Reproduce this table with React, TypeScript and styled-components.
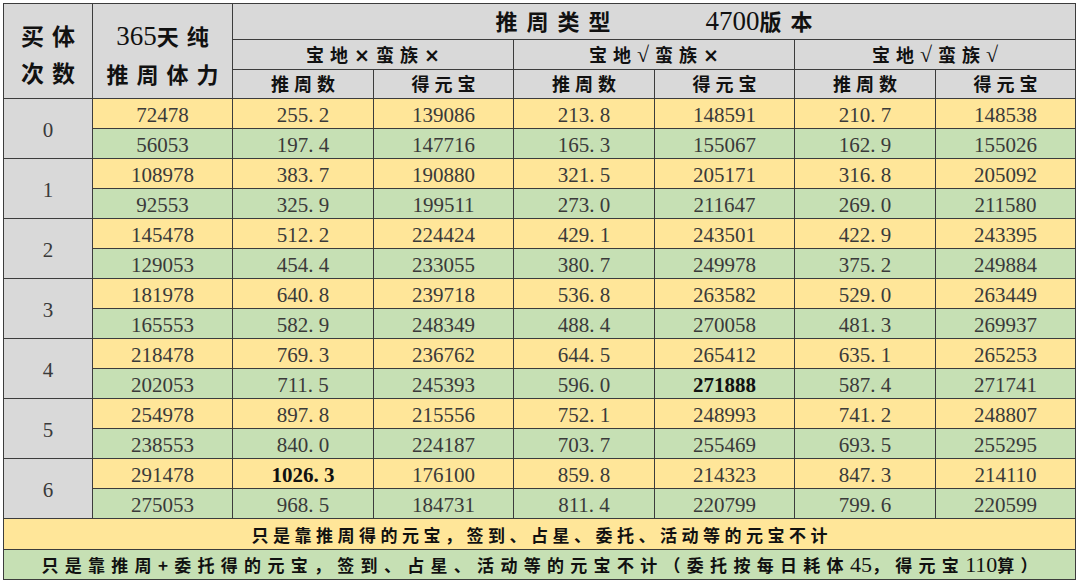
import React from "react";
import styled, { createGlobalStyle } from "styled-components";

const Global = createGlobalStyle`
  html, body { margin: 0; padding: 0; background: #ffffff; }
  body { padding: 3px 0 0 3px; }
`;

const Table = styled.table`
  border-collapse: collapse;
  table-layout: fixed;
  width: 1072px;
  border: 1px solid #3c3c3c;
`;

type Tone = "grey" | "yellow" | "green";
const bg: Record<Tone, string> = {
  grey: "#d9d9d9",
  yellow: "#ffe699",
  green: "#c6e0b4",
};

const Row = styled.tr<{ $h: number }>`
  height: ${(p) => p.$h}px;
`;

const HeadCell = styled.th<{ $size?: number; $ls?: number; $lh?: number; $pt?: number }>`
  background: #d9d9d9;
  border: 1px solid #3c3c3c;
  padding: ${(p) => p.$pt ?? 0}px 0 0 ${(p) => p.$ls ?? 5}px;
  font-family: "Noto Sans CJK SC", "Liberation Serif", serif;
  font-weight: 700;
  font-size: ${(p) => p.$size ?? 18}px;
  letter-spacing: ${(p) => p.$ls ?? 5}px;
  color: #111;
  text-align: center;
  vertical-align: middle;
  line-height: ${(p) => (p.$lh ? p.$lh + "px" : "1.2")};
  white-space: nowrap;
`;

const Num = styled.span<{ $size?: number }>`
  font-family: "Liberation Serif", serif;
  font-weight: 400;
  letter-spacing: 0;
  font-size: ${(p) => p.$size ?? 24}px;
`;

const Mark = styled.span<{ $check?: boolean }>`
  font-family: ${(p) => (p.$check ? '"Liberation Serif", serif' : '"DejaVu Sans", sans-serif')};
  font-weight: ${(p) => (p.$check ? 400 : 700)};
  font-size: ${(p) => (p.$check ? 22 : 19)}px;
  line-height: 1;
  letter-spacing: 6px;
`;

const Cell = styled.td<{ $tone: Tone; $bold?: boolean }>`
  background: ${(p) => bg[p.$tone]};
  border: 1px solid #3c3c3c;
  padding: 3px 0 0 0;
  font-family: "Liberation Serif", serif;
  font-size: 21px;
  font-weight: ${(p) => (p.$bold ? 700 : 400)};
  color: ${(p) => (p.$bold ? "#111" : "#3a3a3a")};
  text-align: center;
  vertical-align: middle;
  line-height: 1;
`;

const IndexCell = styled.td`
  background: #d9d9d9;
  border: 1px solid #3c3c3c;
  padding: 4px 0 0 0;
  font-family: "Liberation Serif", serif;
  font-size: 21px;
  color: #3a3a3a;
  text-align: center;
  vertical-align: middle;
`;

const NoteCell = styled.td<{ $tone: Tone; $ls: number }>`
  background: ${(p) => bg[p.$tone]};
  border: 1px solid #3c3c3c;
  padding: 0 0 0 ${(p) => p.$ls}px;
  font-family: "Noto Sans CJK SC", sans-serif;
  font-weight: 700;
  font-size: 17px;
  letter-spacing: ${(p) => p.$ls}px;
  color: #111;
  text-align: center;
  vertical-align: middle;
  white-space: nowrap;
`;

const Gap = styled.span`
  display: inline-block;
  width: 86px;
`;

const widths = [89, 140, 141, 140, 141, 140, 141, 140];

type DataRow = { v: string[]; bold?: number[] };
const groups: { idx: string; rows: DataRow[] }[] = [
  { idx: "0", rows: [
    { v: ["72478", "255.2", "139086", "213.8", "148591", "210.7", "148538"] },
    { v: ["56053", "197.4", "147716", "165.3", "155067", "162.9", "155026"] },
  ] },
  { idx: "1", rows: [
    { v: ["108978", "383.7", "190880", "321.5", "205171", "316.8", "205092"] },
    { v: ["92553", "325.9", "199511", "273.0", "211647", "269.0", "211580"] },
  ] },
  { idx: "2", rows: [
    { v: ["145478", "512.2", "224424", "429.1", "243501", "422.9", "243395"] },
    { v: ["129053", "454.4", "233055", "380.7", "249978", "375.2", "249884"] },
  ] },
  { idx: "3", rows: [
    { v: ["181978", "640.8", "239718", "536.8", "263582", "529.0", "263449"] },
    { v: ["165553", "582.9", "248349", "488.4", "270058", "481.3", "269937"] },
  ] },
  { idx: "4", rows: [
    { v: ["218478", "769.3", "236762", "644.5", "265412", "635.1", "265253"] },
    { v: ["202053", "711.5", "245393", "596.0", "271888", "587.4", "271741"], bold: [4] },
  ] },
  { idx: "5", rows: [
    { v: ["254978", "897.8", "215556", "752.1", "248993", "741.2", "248807"] },
    { v: ["238553", "840.0", "224187", "703.7", "255469", "693.5", "255295"] },
  ] },
  { idx: "6", rows: [
    { v: ["291478", "1026.3", "176100", "859.8", "214323", "847.3", "214110"], bold: [1] },
    { v: ["275053", "968.5", "184731", "811.4", "220799", "799.6", "220599"] },
  ] },
];

const fmt = (s: string) => s.replace(".", ". ");

const Group = ({ a, b }: { a: boolean; b: boolean }) => (
  <>
    宝地<Mark $check={a}>{a ? "√" : "×"}</Mark>蛮族<Mark $check={b}>{b ? "√" : "×"}</Mark>
  </>
);

export default function App() {
  return (
    <>
      <Global />
      <Table>
        <colgroup>
          {widths.map((w, i) => (
            <col key={i} style={{ width: w }} />
          ))}
        </colgroup>
        <thead>
          <Row $h={36}>
            <HeadCell rowSpan={3} $size={23} $ls={8} $lh={37} $pt={6}>
              买体
              <br />
              次数
            </HeadCell>
            <HeadCell rowSpan={3} $size={22} $ls={8} $lh={37} $pt={6}>
              <Num $size={27}>365</Num>天纯
              <br />
              推周体力
            </HeadCell>
            <HeadCell colSpan={6} $size={22} $ls={9}>
              推周类型
              <Gap />
              <Num $size={27}>4700</Num>版本
            </HeadCell>
          </Row>
          <Row $h={30}>
            <HeadCell colSpan={2} $ls={6}><Group a={false} b={false} /></HeadCell>
            <HeadCell colSpan={2} $ls={6}><Group a={true} b={false} /></HeadCell>
            <HeadCell colSpan={2} $ls={6}><Group a={true} b={true} /></HeadCell>
          </Row>
          <Row $h={29}>
            <HeadCell>推周数</HeadCell>
            <HeadCell>得元宝</HeadCell>
            <HeadCell>推周数</HeadCell>
            <HeadCell>得元宝</HeadCell>
            <HeadCell>推周数</HeadCell>
            <HeadCell>得元宝</HeadCell>
          </Row>
        </thead>
        <tbody>
          {groups.map((g) =>
            g.rows.map((r, ri) => (
              <Row $h={30} key={g.idx + "-" + ri}>
                {ri === 0 && <IndexCell rowSpan={2}>{g.idx}</IndexCell>}
                {r.v.map((val, ci) => (
                  <Cell
                    key={ci}
                    $tone={ri === 0 ? "yellow" : "green"}
                    $bold={r.bold?.includes(ci)}
                  >
                    {ci % 2 === 1 ? fmt(val) : val}
                  </Cell>
                ))}
              </Row>
            ))
          )}
          <Row $h={31}>
            <NoteCell colSpan={8} $tone="yellow" $ls={4.5}>
              只是靠推周得的元宝，签到、占星、委托、活动等的元宝不计
            </NoteCell>
          </Row>
          <Row $h={30}>
            <NoteCell colSpan={8} $tone="green" $ls={6.3}>
              只是靠推周+委托得的元宝，签到、占星、活动等的元宝不计（委托按每日耗体
              <Num $size={22}>45</Num>，得元宝<Num $size={22}>110</Num>算）
            </NoteCell>
          </Row>
        </tbody>
      </Table>
    </>
  );
}
